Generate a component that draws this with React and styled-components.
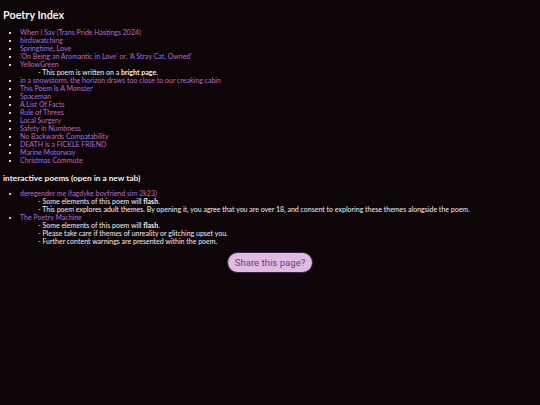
import React from "react";
import styled, { createGlobalStyle } from "styled-components";

const Global = createGlobalStyle`
  html, body { margin: 0; padding: 0; background: #0e0509; }
  body { font-family: Lato, "DejaVu Sans", sans-serif; color: #f2eef0; }
`;

const Page = styled.main`
  padding: 7px 3px;
  font-size: 7px;
  line-height: 8px;
`;

const Title = styled.h1`
  margin: 0 0 5px;
  font-size: 10.8px;
  line-height: 16px;
  font-weight: bold;
  color: #f4f0f2;
`;

const Subtitle = styled.h2`
  margin: 8px 0 5px;
  font-size: 8.3px;
  line-height: 12px;
  font-weight: bold;
  color: #f4f0f2;
`;

const List = styled.ul`
  margin: 0;
  padding-left: 17px;
  list-style: square;
  li::marker { color: #d8d0e0; font-size: 6px; }
`;

const Item = styled.li``;

const Link = styled.a`
  color: #b06cd2;
  text-decoration: none;
`;

const Note = styled.div`
  padding-left: 18px;
  color: #f2eef0;
`;

const Centre = styled.div`
  display: flex;
  justify-content: center;
  margin-top: 7px;
`;

const Share = styled.button`
  font-family: Roboto, "Liberation Sans", Arial, sans-serif;
  font-size: 9.6px;
  white-space: nowrap;
  color: #6b3d80;
  background: #dfbbe3;
  border: 1.5px solid #3f1c46;
  border-radius: 11px;
  padding: 0 7px;
  height: 21px;
`;

const poems = [
  "When I Say (Trans Pride Hastings 2024)",
  "birdswatching",
  "Springtime, Love",
  "‘On Being an Aromantic in Love’ or, ‘A Stray Cat, Owned’",
  "YellowGreen",
  "in a snowstorm, the horizon draws too close to our creaking cabin",
  "This Poem Is A Monster",
  "Spaceman",
  "A List Of Facts",
  "Rule of Threes",
  "Local Surgery",
  "Safety in Numbness",
  "No Backwards Compatability",
  "DEATH is a FICKLE FRIEND",
  "Marine Motorway",
  "Christmas Commute",
];

export default function App() {
  return (
    <>
      <Global />
      <Page>
        <Title>Poetry Index</Title>
        <List>
          {poems.map((p) => (
            <Item key={p}>
              <Link href="#">{p}</Link>
              {p === "YellowGreen" && (
                <Note>- This poem is written on a <b>bright page</b>.</Note>
              )}
            </Item>
          ))}
        </List>
        <Subtitle>interactive poems (open in a new tab)</Subtitle>
        <List>
          <Item>
            <Link href="#">deregender me (fagdyke boyfriend sim 2k23)</Link>
            <Note>- Some elements of this poem will <b>flash</b>.</Note>
            <Note>- This poem explores adult themes. By opening it, you agree that you are over 18, and consent to exploring these themes alongside the poem.</Note>
          </Item>
          <Item>
            <Link href="#">The Poetry Machine</Link>
            <Note>- Some elements of this poem will <b>flash</b>.</Note>
            <Note>- Please take care if themes of unreality or glitching upset you.</Note>
            <Note>- Further content warnings are presented within the poem.</Note>
          </Item>
        </List>
        <Centre>
          <Share>Share this page?</Share>
        </Centre>
      </Page>
    </>
  );
}
